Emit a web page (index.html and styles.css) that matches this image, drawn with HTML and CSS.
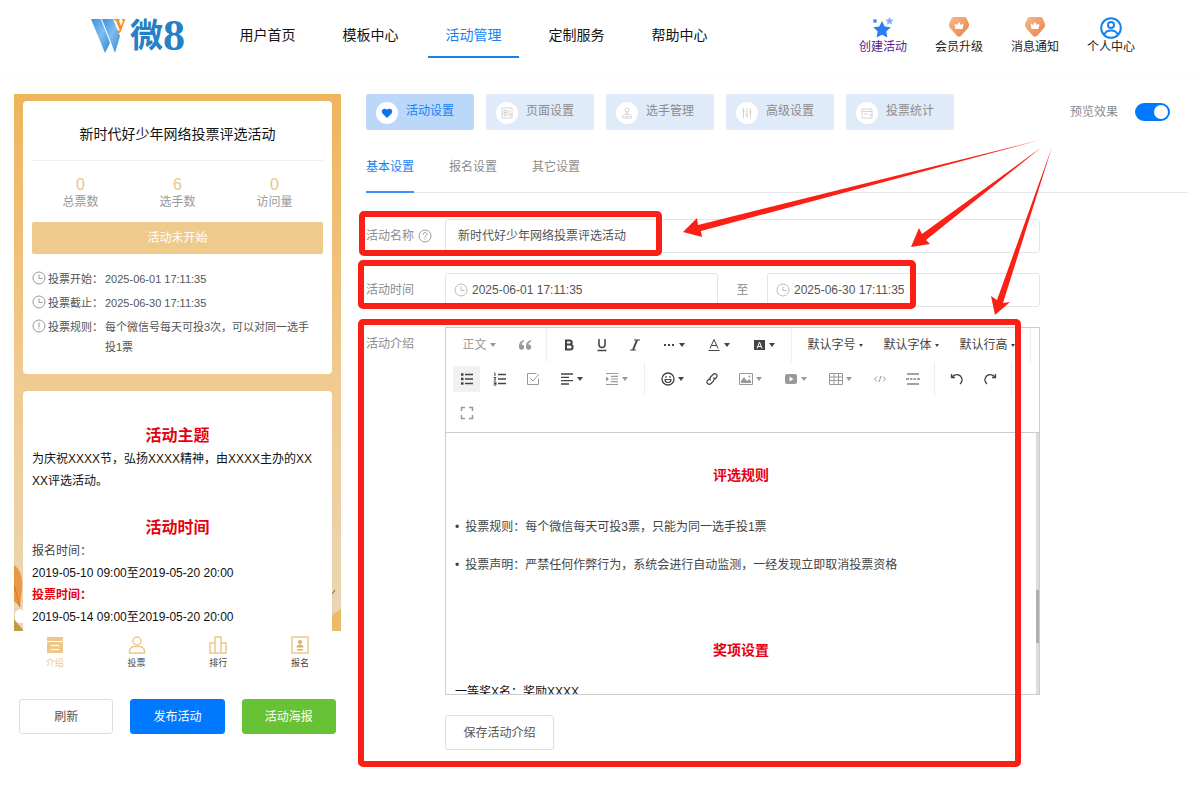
FILE: index.html
```html
<!DOCTYPE html>
<html lang="zh-CN">
	<head>
		<meta charset="utf-8">
		<title>活动管理</title>
		<link rel="stylesheet" href="styles.css">
	</head>
	<body>
		<header class="header">
			<a class="logo" href="#">
				<svg width="36" height="36" viewBox="0 0 36 36">
					<defs>
						<linearGradient id="wing" x1="0" y1="0" x2="1" y2="1">
							<stop offset="0" stop-color="#3d8fd6"/>
							<stop offset="0.5" stop-color="#7fbdf0"/>
							<stop offset="1" stop-color="#2f86cf"/>
						</linearGradient>
						<linearGradient id="badge" x1="0" y1="0" x2="1" y2="1">
							<stop offset="0" stop-color="#f9b98c"/>
							<stop offset="1" stop-color="#e8824a"/>
						</linearGradient>
					</defs>
					<path fill="url(#wing)" d="M1 1h10l9 24-5 10z"/>
					<path fill="url(#wing)" d="M12 1h11l7 17-5 17z"/>
					<path fill="#f78f1e" d="M24 1h5l1 1-1 1 2 5 2-5-1-1V1h3v1l-4 11c-1 3-4 3-4 1s2-2 3-1l-4-10-2-1z"/>
				</svg>
				<span class="logo-wei">微</span><span class="logo-num">8</span>
			</a>
			<nav class="nav">
				<a href="#">用户首页</a>
				<a href="#">模板中心</a>
				<a class="active" href="#">活动管理</a>
				<a href="#">定制服务</a>
				<a href="#">帮助中心</a>
			</nav>
			<div class="tools">
				<a class="visited" href="#">
					<svg width="22" height="22" viewBox="0 0 22 22">
						<path fill="#2b7cf0" d="M10 4l2.700 5.500 6 .8-4.400 4.200 1.100 6-5.400-2.800-5.400 2.800 1.100-6L1.300 10.300l6-.8z"/>
						<path fill="#7db1f8" d="M17.500 0l1.200 2.500 2.800.3-2 2 .5 2.800-2.500-1.400L15 7.600l.5-2.800-2-2 2.800-.3z"/>
						<circle cx="3" cy="4" r="2" fill="#4a90f5"/>
					</svg>
					<span>创建活动</span>
				</a>
				<a href="#">
					<svg width="22" height="22" viewBox="0 0 22 22">
						<path fill="url(#badge)" d="M5 0h12l1.500 1L21 7v2l-1 2-7.500 8.500h-3L2 11 1 9V7l2.500-6z"/>
						<path fill="#fff" d="M6.500 6.500l2.500 1.500 2-3 2 3 2.500-1.500-1 5.500h-7z"/>
					</svg>
					<span>会员升级</span>
				</a>
				<a href="#">
					<svg width="22" height="22" viewBox="0 0 22 22">
						<path fill="url(#badge)" d="M5 0h12l1.500 1L21 7v2l-1 2-7.500 8.500h-3L2 11 1 9V7l2.500-6z"/>
						<path fill="#fff" d="M6.500 6.500l2.500 1.500 2-3 2 3 2.500-1.500-1 5.500h-7z"/>
					</svg>
					<span>消息通知</span>
				</a>
				<a href="#">
					<svg width="22" height="22" viewBox="0 0 22 22" fill="none" stroke="#1482f0" stroke-width="2">
						<circle cx="11" cy="11" r="9.800"/>
						<circle cx="11" cy="8" r="3"/>
						<path d="M4.500 17.500c1-3.500 3-4 6.500-4s5.500.5 6.500 4"/>
					</svg>
					<span>个人中心</span>
				</a>
			</div>
		</header>

		<main class="main">
			<aside class="side">
				<div class="phone">
					<svg class="scene" width="327" height="70" viewBox="0 0 327 70">
						<path fill="#ea9848" d="M0 4c6 4 9 12 8 24L6 46 0 40z"/>
						<path fill="none" stroke="#c9772f" d="M0 24l6 22"/>
						<path fill="#fff" d="M1 52c3-5 8-5 9 0v10H1z"/>
						<path fill="#c49a45" d="M0 58l10 12H0z"/>
						<path fill="#e9bb66" d="M318 54l9-6v22h-9z"/>
						<path fill="none" stroke="#6b5a3c" d="M318 33l3-4"/>
					</svg>
					<section class="card">
						<h2 class="card-title">新时代好少年网络投票评选活动</h2>
						<ul class="stats">
							<li><b>0</b>总票数</li>
							<li><b>6</b>选手数</li>
							<li><b>0</b>访问量</li>
						</ul>
						<div class="status">活动未开始</div>
						<ul class="info">
							<li>
								<svg class="ico" viewBox="0 0 14 14"><circle cx="7" cy="7" r="6"/><path d="M7 3.500V7.500h3.500"/></svg>
								<span>投票开始：</span><p>2025-06-01 17:11:35</p>
							</li>
							<li>
								<svg class="ico" viewBox="0 0 14 14"><circle cx="7" cy="7" r="6"/><path d="M7 3.500V7.500h3.500"/></svg>
								<span>投票截止：</span><p>2025-06-30 17:11:35</p>
							</li>
							<li>
								<svg class="ico" viewBox="0 0 14 14"><circle cx="7" cy="7" r="6"/><path d="M7 3.500V8.500M7 9.500v1"/></svg>
								<span>投票规则：</span><p>每个微信号每天可投3次，可以对同一选手<br>投1票</p>
							</li>
						</ul>
					</section>
					<section class="card intro">
						<h3>活动主题</h3>
						<p>为庆祝XXXX节，弘扬XXXX精神，由XXXX主办的XX<br>XX评选活动。</p>
						<h3 class="second">活动时间</h3>
						<p class="soft">报名时间：</p>
						<p>2019-05-10 09:00至2019-05-20 20:00</p>
						<p class="red">投票时间：</p>
						<p>2019-05-14 09:00至2019-05-20 20:00</p>
					</section>
				</div>
				<nav class="tabbar">
					<a class="active" href="#">
						<svg width="18" height="18" viewBox="0 0 18 18"><path fill="#edc88d" d="M1 1h16v4H1zM1 6h16v11H1z"/><path stroke="#fff" d="M5 9.500h8M5 13.500h8"/></svg>
						介绍
					</a>
					<a href="#">
						<svg width="18" height="18" viewBox="0 0 18 18" fill="none" stroke="#edc88d" stroke-width="1.500"><circle cx="9" cy="5" r="4"/><path d="M1.500 17v-2c0-3 3-4.500 5-4.500h5c2 0 5 1.500 5 4.500v2z"/></svg>
						投票
					</a>
					<a href="#">
						<svg width="18" height="18" viewBox="0 0 18 18" fill="none" stroke="#edc88d" stroke-width="1.500"><path d="M1 17V7h5v10zM6 17V1h6v16zM12 17V7h5v10z"/></svg>
						排行
					</a>
					<a href="#">
						<svg width="18" height="18" viewBox="0 0 18 18"><path fill="none" stroke="#edc88d" stroke-width="1.500" d="M1 1h16v16H1z"/><circle cx="9" cy="6" r="2" fill="#e2ac5f"/><path fill="#e2ac5f" d="M5.500 11.500c0-4 7-4 7 0zM6 13h6v1.500H6z"/></svg>
						报名
					</a>
				</nav>
				<div class="actions">
					<button class="btn" type="button">刷新</button>
					<button class="btn btn-blue" type="button">发布活动</button>
					<button class="btn btn-green" type="button">活动海报</button>
				</div>
			</aside>

			<section class="content">
				<div class="topbar">
					<nav class="tabs">
						<a class="active" href="#">
							<i><svg width="12" height="12" viewBox="0 0 12 12"><path fill="#0b74ee" d="M6 11L1.500 6.500C-.5 4 2 .5 5 2l1 .8L7 2c3-1.500 5.500 2 3.500 4.500z"/></svg></i>
							<span>活动设置</span>
						</a>
						<a href="#">
							<i><svg width="12" height="12" viewBox="0 0 12 12"><path d="M1 1h10v10H1zM3 3.500h3v2H3zM8 3v3M3 8.500h3M8 8.500h2M1 7h10"/></svg></i>
							<span>页面设置</span>
						</a>
						<a href="#">
							<i><svg width="12" height="12" viewBox="0 0 12 12"><circle cx="6" cy="3" r="2"/><path d="M6 5v3M1.500 11c0-3 2-4 4.500-4s4.500 1 4.500 4zM4 9.500h4"/></svg></i>
							<span>选手管理</span>
						</a>
						<a href="#">
							<i><svg width="12" height="12" viewBox="0 0 12 12"><path d="M2.500 1v10M6 1v10M9.500 1v10M1 4h3M4.500 8h3M8 5h3"/></svg></i>
							<span>高级设置</span>
						</a>
						<a href="#">
							<i><svg width="12" height="12" viewBox="0 0 12 12"><path d="M1 2h10v9H1zM1 4.500h10M3 7h4M8 8h3"/></svg></i>
							<span>投票统计</span>
						</a>
					</nav>
					<label class="preview">预览效果<input class="switch" type="checkbox" checked></label>
				</div>
				<nav class="subtabs">
					<a class="active" href="#">基本设置</a>
					<a href="#">报名设置</a>
					<a href="#">其它设置</a>
				</nav>

				<form class="form">
					<div class="row">
						<label class="label" for="name">活动名称
							<svg class="ico" viewBox="0 0 14 14"><circle cx="7" cy="7" r="6"/><path d="M5 5.800c0-3 4-3 4-.5 0 1.500-2 1.500-2 3.200M7 9.500v1"/></svg>
						</label>
						<div class="box"><input id="name" type="text" value="新时代好少年网络投票评选活动"></div>
					</div>
					<div class="row">
						<label class="label" for="start">活动时间</label>
						<div class="box date">
							<svg class="ico" viewBox="0 0 14 14"><circle cx="7" cy="7" r="6"/><path d="M7 3.500V7.500h3.500"/></svg>
							<input id="start" type="text" value="2025-06-01 17:11:35">
						</div>
						<label class="to" for="end">至</label>
						<div class="box date">
							<svg class="ico" viewBox="0 0 14 14"><circle cx="7" cy="7" r="6"/><path d="M7 3.500V7.500h3.500"/></svg>
							<input id="end" type="text" value="2025-06-30 17:11:35">
						</div>
					</div>
					<div class="row">
						<span class="label">活动介绍</span>
						<div class="field">
							<div class="editor">
								<div class="toolbar">
									<button type="button" class="head dim">正文<em></em></button>
									<button type="button" class="dim" aria-label="引用"><svg viewBox="0 0 14 14"><path fill="currentColor" stroke="none" d="M6 2C2.500 3 1 5 1 9a2.600 2.600 0 1 0 2.500-2.500C3.500 5 4.500 4 6 3.500zM13 2C9.500 3 8 5 8 9a2.600 2.600 0 1 0 2.500-2.500C10.500 5 11.500 4 13 3.500z"/></svg></button>
									<span class="sep"></span>
									<button type="button" aria-label="粗体"><svg viewBox="0 0 14 14"><path stroke-width="2" d="M4 2.500h3.500c3 0 3 4 0 4H4zM4 6.500h4c3.500 0 3.500 5 0 5H4z"/></svg></button>
									<button type="button" aria-label="下划线"><svg viewBox="0 0 14 14"><path stroke-width="1.500" d="M4 1v5.500c0 4 6 4 6 0V1M2.500 12.500h9"/></svg></button>
									<button type="button" aria-label="斜体"><svg viewBox="0 0 14 14"><path stroke-width="1.200" d="M6 2h6M2 12h6"/><path stroke-width="2" d="M9 2L5 12"/></svg></button>
									<button type="button" class="drop" aria-label="更多"><svg viewBox="0 0 14 14"><path fill="currentColor" stroke="none" d="M2 6h2v2H2zM6 6h2v2H6zM10 6h2v2h-2z"/></svg><em></em></button>
									<button type="button" class="drop" aria-label="文字颜色"><svg viewBox="0 0 14 14"><path d="M3 10.500L7 1.500l4 9M4.500 7.500h5M1.500 12.500h11"/></svg><em></em></button>
									<button type="button" class="drop" aria-label="背景色"><svg viewBox="0 0 14 14"><path fill="currentColor" stroke="none" d="M2 2h11v10H2z"/><path stroke="#fff" d="M5 10.500L7.500 4l2.500 6.500M6 8.500h3"/></svg><em></em></button>
									<span class="sep"></span>
									<button type="button" class="font">默认字号<em></em></button>
									<button type="button" class="font">默认字体<em></em></button>
									<button type="button" class="font">默认行高<em></em></button>
									<span class="sep"></span>
									<button type="button" class="on" aria-label="无序列表"><svg viewBox="0 0 14 14"><path stroke-width="1.500" d="M5 2.500h8M5 7h8M5 11.500h8"/><path stroke-width="2.500" d="M1 2.500h2.500M1 7h2.500M1 11.500h2.500"/></svg></button>
									<button type="button" aria-label="有序列表"><svg viewBox="0 0 14 14"><path stroke-width="1.500" d="M5 2.500h8M5 7h8M5 11.500h8"/><path d="M1 1h1v3M.5 5.500H3L1 8h2M.5 10H3v3H.5M1 11.500h2"/></svg></button>
									<button type="button" class="dim" aria-label="待办"><svg viewBox="0 0 14 14"><path d="M12.500 6.500v6h-11v-11h9M4 6l3 3 6-7"/></svg></button>
									<button type="button" class="drop" aria-label="对齐"><svg viewBox="0 0 14 14"><path stroke-width="1.300" d="M1 2h12M1 5.300h8M1 8.600h12M1 12h8"/></svg><em></em></button>
									<button type="button" class="drop dim" aria-label="缩进"><svg viewBox="0 0 14 14"><path stroke-width="1.200" d="M1 1.500h12M6 4.300h7M6 7h7M6 9.700h7M1 12.500h12"/><path fill="currentColor" stroke="none" d="M1 4.500L4 7 1 9.500z"/></svg><em></em></button>
									<span class="sep"></span>
									<button type="button" class="drop" aria-label="表情"><svg viewBox="0 0 14 14"><circle cx="7" cy="7" r="6" stroke-width="1.300"/><path d="M4 7.500c0 4 6 4 6 0zM5 4v2M9 4v2" stroke-width="1.200"/></svg><em></em></button>
									<button type="button" aria-label="链接"><svg viewBox="0 0 14 14"><path stroke-width="1.200" d="M5.500 8.500c-1.500-1.500-.5-3 .5-4l2-2c2-2 5.500.5 3.500 3L10 7M8.500 5.500c1.500 1.500.5 3-.5 4l-2 2c-2 2-5.500-.5-3.500-3L4 7"/></svg></button>
									<button type="button" class="drop dim" aria-label="图片"><svg viewBox="0 0 14 14"><path d="M.5 1.500h13v11H.5z"/><path fill="currentColor" stroke="none" d="M2 11V9l3-4 3 4 2-2 2 2v2z"/><circle cx="10.500" cy="4.500" r="1" fill="currentColor" stroke="none"/></svg><em></em></button>
									<button type="button" class="drop dim" aria-label="视频"><svg viewBox="0 0 14 14"><rect x="1" y="2" width="12" height="10" rx="2" fill="currentColor" stroke="none"/><path fill="#fff" stroke="none" d="M5.500 4.500L9.500 7l-4 2.500z"/></svg><em></em></button>
									<button type="button" class="drop dim" aria-label="表格"><svg viewBox="0 0 14 14"><path d="M.5 1.500h13v11H.5zM.5 5h13M.5 8.500h13M5 1.500v11M9.500 1.500v11"/></svg><em></em></button>
									<button type="button" class="dim" aria-label="代码"><svg viewBox="0 0 14 14"><path d="M4 4.500L1.500 7 4 9.500M10 4.500L12.500 7 10 9.500M8 4L6 10"/></svg></button>
									<button type="button" aria-label="分割线"><svg viewBox="0 0 14 14"><path stroke-width="1.200" d="M1 2h12M1 12h12M0 7h3M4 7h2.500M7.500 7H10M11 7h3"/></svg></button>
									<span class="sep"></span>
									<button type="button" aria-label="撤销"><svg viewBox="0 0 14 14"><path stroke-width="1.300" d="M1.500 2v3.500H5M1.500 5.500c3-4 8-3.500 10 0 1 2 .5 4.500-1.500 6.500"/></svg></button>
									<button type="button" aria-label="重做"><svg viewBox="0 0 14 14"><path stroke-width="1.300" d="M12.500 2v3.500H9M12.500 5.500c-3-4-8-3.500-10 0-1 2-.5 4.500 1.500 6.500"/></svg></button>
									<span class="sep"></span>
									<button type="button" class="dim" aria-label="全屏"><svg viewBox="0 0 14 14"><path stroke-width="1.500" d="M1.500 5V1.500H5M9 1.500h3.500V5M12.500 9v3.500H9M5 12.500H1.500V9"/></svg></button>
								</div>
								<div class="editor-body">
									<div class="text" contenteditable="true">
										<h4>评选规则</h4>
										<ul>
											<li>投票规则：每个微信每天可投3票，只能为同一选手投1票</li>
											<li>投票声明：严禁任何作弊行为，系统会进行自动监测，一经发现立即取消投票资格</li>
										</ul>
										<h4 class="prize">奖项设置</h4>
										<p>一等奖X名：奖励XXXX</p>
									</div>
									<div class="track"><div class="thumb"></div></div>
								</div>
							</div>
							<button class="btn save" type="button">保存活动介绍</button>
						</div>
					</div>
				</form>
			</section>
		</main>

		<!-- 操作指引：红框和箭头 -->
		<svg class="guide" width="1200" height="806" viewBox="0 0 1200 806">
			<g fill="none" stroke="#fb2015" stroke-width="6">
				<rect x="362" y="214" width="297" height="39" rx="2"/>
				<rect x="361" y="263" width="552" height="43" rx="2"/>
				<rect x="361" y="322" width="657" height="442" rx="2"/>
			</g>
			<g fill="#fb2015">
				<path d="M683 232l14-14 1 7L1040 140 701 231l1 6z"/>
				<path d="M911 247l8-19 3 6L1042 147 926 240l4 4z"/>
				<path d="M995 315l-4-19 6 4L1052 147 1003 303l7-1z"/>
			</g>
		</svg>
	</body>
</html>
```

FILE: styles.css
```css
* {
	margin: 0;
	padding: 0;
	box-sizing: border-box;
}

body {
	position: relative;
	font: 12px/20px "Liberation Sans", "Noto Sans CJK SC", sans-serif;
	color: #555;
	background: #fff;
}

ul {
	list-style: none;
}

a {
	color: inherit;
	text-decoration: none;
}

input,
button {
	font: inherit;
	color: inherit;
	border: none;
	background: none;
	outline: none;
}

svg {
	display: block;
	flex: none;
}

.ico {
	width: 14px;
	height: 14px;
	fill: none;
	stroke: #999;
}

/* 顶部 */
.header {
	display: flex;
	height: 77px;
	padding: 0 65px 0 90px;
	border-bottom: 1px solid #fcfcfc;
}

.logo {
	display: flex;
	align-items: center;
	width: 132px;
	height: 72px;
	color: #2580c6;
	font-weight: bold;
}

.logo-wei {
	margin-left: 4px;
	font-size: 33px;
	line-height: 36px;
}

.logo-num {
	font-family: "Liberation Serif", serif;
	font-size: 44px;
	line-height: 36px;
}

.nav {
	display: flex;
	gap: 12px;
	font-size: 14px;
	color: #111;
}

.nav a {
	width: 91px;
	height: 58px;
	padding-top: 14px;
	line-height: 42px;
	text-align: center;
}

.nav .active {
	color: #1482f0;
	border-bottom: 2px solid #1482f0;
}

.tools {
	display: flex;
	gap: 28px;
	margin-left: auto;
	padding-top: 17px;
	color: #222;
	white-space: nowrap;
}

.tools a {
	display: flex;
	flex-direction: column;
	align-items: center;
	width: 48px;
	line-height: 16px;
}

.tools .visited {
	color: #551a8b;
}

.main {
	display: flex;
	gap: 25px;
	padding: 17px 12px 40px 14px;
}

/* 左侧预览 */
.side {
	width: 327px;
	flex: none;
}

.phone {
	position: relative;
	height: 537px;
	padding: 7px 9px 0;
	overflow: hidden;
	background: linear-gradient(#efb45c, #f0cb92 55%, #ead6b6);
}

.scene {
	position: absolute;
	left: 0;
	bottom: 0;
}

.card {
	position: relative;
	padding: 0 9px;
	border-radius: 4px;
	background: #fff;
}

.card-title {
	padding-top: 8px;
	border-bottom: 1px solid #f0f0f0;
	font-size: 14px;
	line-height: 51px;
	font-weight: normal;
	text-align: center;
	color: #111;
}

.stats {
	display: flex;
	padding: 15px 0 11px;
	line-height: 17px;
	color: #999;
	text-align: center;
}

.stats li {
	flex: 1;
}

.stats b {
	display: block;
	font-size: 16px;
	line-height: 18px;
	font-weight: normal;
	color: #edc48a;
}

.status {
	line-height: 32px;
	border-radius: 2px;
	background: #eeca8d;
	color: #fff;
	text-align: center;
}

.info {
	padding: 15px 0 17px;
	font-size: 11px;
}

.info li {
	display: flex;
	margin-bottom: 4px;
}

.info li:last-child {
	margin-bottom: 0;
}

.info .ico {
	margin-top: 2px;
}

.info span {
	width: 57px;
	margin-left: 2px;
}

.intro {
	height: 300px;
	margin-top: 17px;
	padding-top: 33px;
	line-height: 22px;
	color: #111;
	white-space: nowrap;
}

.intro h3 {
	font-size: 16px;
	line-height: 24px;
	text-align: center;
	color: #e60012;
}

.intro .second {
	margin-top: 24px;
}

.intro .soft {
	color: #444;
}

.intro .red {
	color: #e60012;
	font-weight: bold;
}

.tabbar {
	display: flex;
	height: 54px;
	padding-top: 5px;
	font-size: 9px;
	line-height: 18px;
	color: #444;
}

.tabbar a {
	display: flex;
	flex: 1;
	flex-direction: column;
	align-items: center;
}

.tabbar .active {
	color: #edc48a;
}

.actions {
	display: grid;
	grid-template-columns: repeat(3, 1fr);
	gap: 17px;
	padding: 14px 5px 0;
}

.btn {
	height: 35px;
	border: 1px solid #dcdfe6;
	border-radius: 3px;
	background: #fff;
	cursor: pointer;
}

.btn-blue {
	border-color: #0079ff;
	background: #0079ff;
	color: #fff;
}

.btn-green {
	border-color: #67c236;
	background: #67c236;
	color: #fff;
}

/* 右侧设置 */
.content {
	flex: 1;
	min-width: 0;
	color: #8c8c8c;
}

.topbar {
	display: flex;
	justify-content: space-between;
	padding-right: 18px;
}

.tabs {
	display: flex;
	gap: 12px;
}

.tabs a {
	display: flex;
	gap: 8px;
	width: 108px;
	height: 36px;
	padding-left: 10px;
	border-radius: 3px;
	background: #e0ebf9;
	line-height: 34px;
}

.tabs i {
	display: flex;
	align-items: center;
	justify-content: center;
	width: 22px;
	height: 22px;
	margin-top: 8px;
	border-radius: 50%;
	background: #fff;
}

.tabs svg {
	fill: none;
	stroke: #d6d2d2;
}

.tabs .active {
	background: #bbd8fb;
	color: #1482f0;
}

.tabs .active svg {
	stroke: none;
}

.preview {
	display: flex;
	align-items: center;
	gap: 17px;
}

.switch {
	display: flex;
	justify-content: flex-end;
	width: 35px;
	height: 18px;
	padding: 2px;
	border-radius: 9px;
	background: #0079ff;
	appearance: none;
	cursor: pointer;
}

.switch::before {
	content: "";
	width: 14px;
	height: 14px;
	border-radius: 50%;
	background: #fff;
}

.switch:not(:checked) {
	justify-content: flex-start;
	background: #ccc;
}

.subtabs {
	display: flex;
	gap: 35px;
	margin-top: 14px;
	box-shadow: inset 0 -1px #e4e7ed;
	line-height: 47px;
}

.subtabs a {
	border-bottom: 2px solid transparent;
}

.subtabs .active {
	color: #1482f0;
	border-color: #3c93f5;
}

.form {
	display: grid;
	gap: 20px;
	margin: 26px 148px 0 0;
}

.row {
	display: flex;
}

.label {
	display: flex;
	align-items: center;
	gap: 4px;
	flex: none;
	width: 79px;
	height: 34px;
}

.box {
	display: flex;
	align-items: center;
	flex: 1;
	min-width: 0;
	height: 34px;
	padding: 0 12px;
	border: 1px solid #e1e4ea;
	border-radius: 3px;
	color: #555;
}

.box input {
	flex: 1;
	min-width: 0;
}

.date {
	gap: 4px;
	padding: 0 8px;
}

.date .ico {
	stroke: #bbb;
}

.to {
	width: 49px;
	line-height: 34px;
	text-align: center;
}

.field {
	flex: 1;
	min-width: 0;
}

/* 编辑器 */
.editor {
	border: 1px solid #ccc;
}

.toolbar {
	display: flex;
	flex-wrap: wrap;
	padding: 0 0 2px 4px;
	border-bottom: 1px solid #ccc;
	color: #444;
}

.toolbar button {
	display: flex;
	align-items: center;
	justify-content: center;
	gap: 3px;
	width: 33px;
	height: 34px;
	cursor: pointer;
}

.toolbar .drop {
	width: 45px;
}

.toolbar .head {
	width: 58px;
}

.toolbar .font {
	width: 76px;
}

.toolbar .dim {
	color: #999;
}

/* 选中的按钮只在图标周围着色 */
.toolbar .on {
	border: solid #fff;
	border-width: 4px 3px;
	background: #f1f1f1;
}

.toolbar svg {
	width: 14px;
	height: 14px;
	fill: none;
	stroke: currentColor;
}

.toolbar em {
	border: 3px solid transparent;
	border-top: 4px solid currentColor;
	border-bottom: none;
}

.toolbar .font em {
	border-width: 3px 2px 0;
}

.sep {
	width: 1px;
	height: 34px;
	margin: 0 5px;
	background: #eee;
}

.editor-body {
	display: flex;
	height: 261px;
	overflow: hidden;
}

.text {
	flex: 1;
	padding: 32px 9px 0;
	color: #444;
	outline: none;
}

.text h4 {
	font-size: 14px;
	text-align: center;
	color: #e60012;
}

.text ul {
	margin-top: 32px;
}

.text li {
	margin-bottom: 18px;
}

.text li::before {
	content: "•";
	margin-right: 6px;
}

.text .prize {
	margin: 65px 0 22px;
}

.text p {
	color: #111;
}

.track {
	width: 3px;
	padding-top: 157px;
	background: #dcdcdc;
}

.thumb {
	height: 53px;
	background: #b0b0b0;
}

.save {
	width: 109px;
	margin-top: 20px;
	color: #555;
}

.guide {
	position: absolute;
	top: 0;
	left: 0;
	pointer-events: none;
}
```
